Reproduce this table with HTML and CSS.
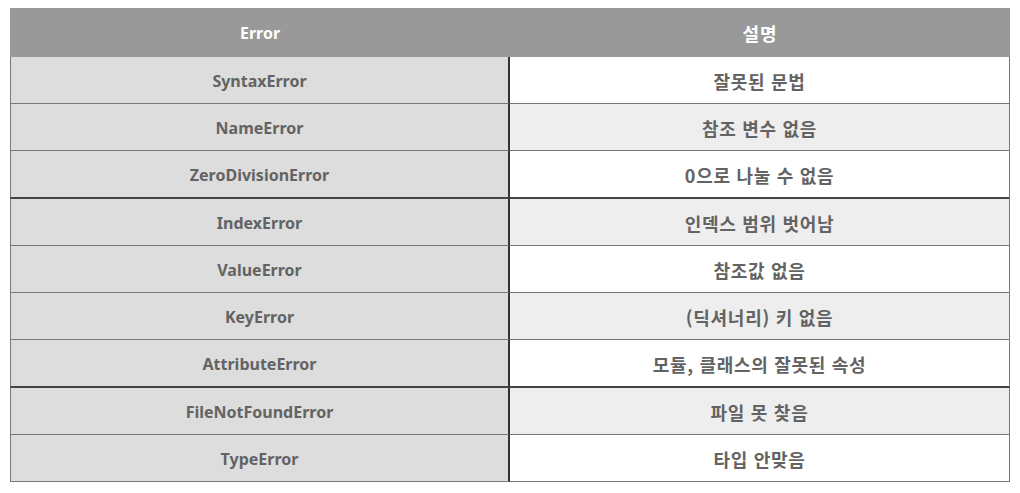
FILE: index.html
```html
<!DOCTYPE html>
<html lang="ko">
<head>
<meta charset="utf-8">
<link rel="stylesheet" href="styles.css">
</head>
<body>
<table class="errors">
  <thead>
    <tr><th>Error</th><th class="ko">설명</th></tr>
  </thead>
  <tbody>
    <tr><td class="name">SyntaxError</td><td class="desc">잘못된 문법</td></tr>
    <tr><td class="name">NameError</td><td class="desc">참조 변수 없음</td></tr>
    <tr class="sep"><td class="name">ZeroDivisionError</td><td class="desc">0으로 나눌 수 없음</td></tr>
    <tr><td class="name">IndexError</td><td class="desc">인덱스 범위 벗어남</td></tr>
    <tr><td class="name">ValueError</td><td class="desc">참조값 없음</td></tr>
    <tr><td class="name">KeyError</td><td class="desc">(딕셔너리) 키 없음</td></tr>
    <tr class="sep"><td class="name">AttributeError</td><td class="desc">모듈, 클래스의 잘못된 속성</td></tr>
    <tr><td class="name">FileNotFoundError</td><td class="desc">파일 못 찾음</td></tr>
    <tr><td class="name">TypeError</td><td class="desc">타입 안맞음</td></tr>
  </tbody>
</table>
</body>
</html>
```

FILE: styles.css
```css
html, body {
  margin: 0;
  padding: 0;
  background: #ffffff;
}

body {
  padding: 8px 0 0 10px;
  font-family: "Noto Sans", "Noto Sans CJK KR", sans-serif;
  font-weight: 700;
  font-size: 16px;
}

.errors {
  border-collapse: separate;
  border-spacing: 0;
  width: 1000px;
  table-layout: fixed;
}

.errors th {
  background: #999999;
  color: #ffffff;
  padding: 14px 0 12px;
  line-height: 23px;
  text-align: center;
  font-weight: 700;
  font-size: 16px;
  border: 0;
}

.errors th.ko {
  font-family: "Noto Sans CJK KR", sans-serif;
  font-size: 18px;
  letter-spacing: 1px;
}

.errors td {
  padding: 13px 0 10px;
  line-height: 23px;
  text-align: center;
  color: #636363;
  border-bottom: 1px solid #777777;
}

.errors tr.sep td {
  border-bottom: 2px solid #444444;
}

.errors td.name {
  width: 498px;
  background: #dcdddc;
  border-left: 1px solid #777777;
  border-right: 2px solid #333333;
}

.errors td.desc {
  font-family: "Noto Sans CJK KR", sans-serif;
  font-size: 18px;
  letter-spacing: 0.7px;
  background: #ffffff;
  border-right: 1px solid #777777;
}

.errors tbody tr:nth-child(even) td.desc {
  background: #eeeeee;
}
```
